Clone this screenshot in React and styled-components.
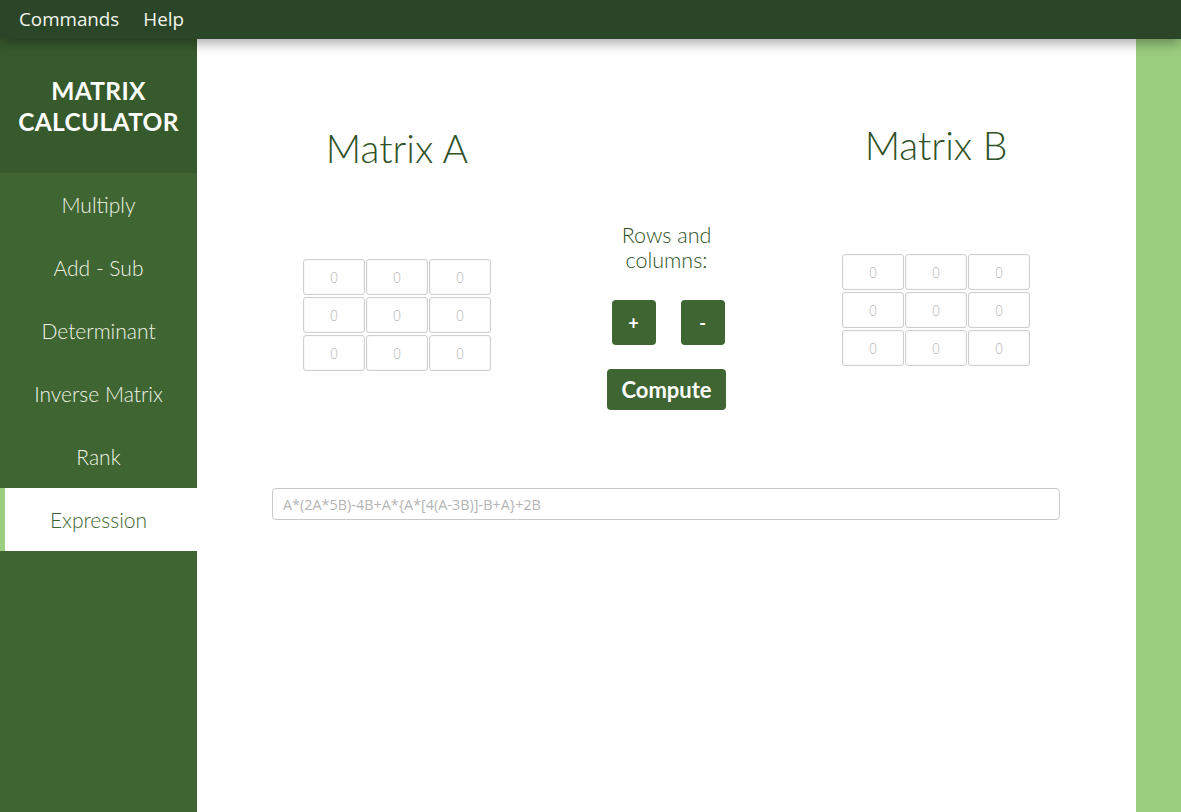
import React from 'react';
import styled, { createGlobalStyle } from 'styled-components';

const GlobalStyle = createGlobalStyle`
  html, body {
    margin: 0;
    padding: 0;
    height: 100%;
    overflow: hidden;
  }
  #root {
    height: 100%;
  }
  * {
    box-sizing: border-box;
  }
`;

const Page = styled.div`
  display: flex;
  flex-direction: column;
  width: 100vw;
  height: 100vh;
  font-family: "Lato", "Open Sans", sans-serif;
`;

const MenuBar = styled.div`
  height: 39px;
  flex-shrink: 0;
  display: flex;
  align-items: center;
  gap: 24px;
  padding-left: 19px;
  background-color: #2a4527;
  box-shadow: 0 4px 12px rgba(0, 0, 0, 0.35);
  position: relative;
  z-index: 2;
`;

const MenuItem = styled.span`
  font-family: "Open Sans", "Noto Sans", sans-serif;
  font-size: 18.8px;
  color: #f4f6ee;
  margin-top: -2px;
`;

const Body = styled.div`
  flex: 1;
  display: flex;
  flex-direction: row;
`;

const SideBar = styled.div`
  width: 197px;
  display: flex;
  flex-direction: column;
  background-color: #3e6532;
`;

const Brand = styled.div`
  height: 134px;
  display: flex;
  align-items: center;
  justify-content: center;
  text-align: center;
  background-color: #375a2d;
  color: #ffffff;
  font-weight: 700;
  font-size: 24.5px;
  line-height: 31px;
  letter-spacing: 0.3px;
  padding-bottom: 1px;
`;

const NavItem = styled.div`
  height: 63px;
  display: flex;
  align-items: center;
  justify-content: center;
  font-weight: 300;
  font-size: 21px;
  color: ${p => (p.$active ? '#3e6532' : '#f1f3e4')};
  background-color: ${p => (p.$active ? '#ffffff' : 'transparent')};
  border-left: 5px solid ${p => (p.$active ? '#9bcd7f' : 'transparent')};
  padding-right: 5px;
`;

const Main = styled.div`
  flex: 1;
  background-color: #ffffff;
  display: flex;
  flex-direction: column;
`;

const Panels = styled.div`
  display: grid;
  grid-template-columns: 400px 1fr 400px;
`;

const MatrixColumn = styled.div`
  display: flex;
  flex-direction: column;
  align-items: center;
  padding-top: ${p => p.$top}px;
`;

const Title = styled.h2`
  margin: 0;
  height: 44px;
  line-height: 44px;
  font-weight: 300;
  font-size: 39px;
  color: #2e5226;
`;

const Grid = styled.div`
  margin-top: ${p => p.$gap}px;
  display: grid;
  grid-template-columns: repeat(3, 62px);
  gap: 2px 1px;
`;

const Cell = styled.input`
  width: 62px;
  height: 36px;
  border: 1px solid #cfcfcf;
  border-radius: 3px;
  box-shadow: inset 0 0 2px rgba(0, 0, 0, 0.08);
  text-align: center;
  font-family: "Open Sans", "Noto Sans", sans-serif;
  font-weight: 300;
  font-size: 14px;
  color: #999;
  background: #fff;
  &::placeholder {
    color: #b8b8b8;
  }
`;

const Controls = styled.div`
  display: flex;
  flex-direction: column;
  align-items: center;
  padding-top: 184px;
`;

const Label = styled.div`
  text-align: center;
  font-weight: 300;
  font-size: 21.5px;
  line-height: 25px;
  color: #2e5226;
`;

const ButtonRow = styled.div`
  display: flex;
  gap: 25px;
  margin-top: 27px;
  padding-left: 3px;
`;

const SquareButton = styled.button`
  width: 44px;
  height: 45px;
  border: none;
  border-radius: 4px;
  background-color: #3e6532;
  color: #ffffff;
  font-family: "Lato", sans-serif;
  font-weight: 700;
  font-size: 18px;
`;

const ComputeButton = styled.button`
  margin-top: 24px;
  width: 119px;
  height: 41px;
  border: none;
  border-radius: 4px;
  background-color: #3e6532;
  color: #ffffff;
  font-family: "Lato", sans-serif;
  font-weight: 700;
  font-size: 22px;
`;

const Expression = styled.input`
  margin: 78px 76px 0 75px;
  height: 32px;
  border: 1px solid #c8c8c8;
  border-radius: 4px;
  padding: 0 10px;
  font-family: "Open Sans", "Noto Sans", sans-serif;
  font-size: 14.4px;
  &::placeholder {
    color: #b4b4b4;
  }
`;

const RightStrip = styled.div`
  width: 45px;
  background-color: #9bcd7f;
`;

const navItems = ['Multiply', 'Add - Sub', 'Determinant', 'Inverse Matrix', 'Rank', 'Expression'];

function Matrix({ title, top, gap }) {
  return (
    <MatrixColumn $top={top}>
      <Title>{title}</Title>
      <Grid $gap={gap}>
        {Array.from({ length: 9 }).map((_, i) => (
          <Cell key={i} placeholder="0" />
        ))}
      </Grid>
    </MatrixColumn>
  );
}

export default function App() {
  return (
    <Page>
      <GlobalStyle />
      <MenuBar>
        <MenuItem>Commands</MenuItem>
        <MenuItem>Help</MenuItem>
      </MenuBar>
      <Body>
        <SideBar>
          <Brand>MATRIX<br />CALCULATOR</Brand>
          {navItems.map(item => (
            <NavItem key={item} $active={item === 'Expression'}>{item}</NavItem>
          ))}
        </SideBar>
        <Main>
          <Panels>
            <Matrix title="Matrix A" top={87} gap={89} />
            <Controls>
              <Label>Rows and<br />columns:</Label>
              <ButtonRow>
                <SquareButton>+</SquareButton>
                <SquareButton>-</SquareButton>
              </ButtonRow>
              <ComputeButton>Compute</ComputeButton>
            </Controls>
            <Matrix title="Matrix B" top={84} gap={87} />
          </Panels>
          <Expression placeholder="A*(2A*5B)-4B+A*{A*[4(A-3B)]-B+A}+2B" />
        </Main>
        <RightStrip />
      </Body>
    </Page>
  );
}
